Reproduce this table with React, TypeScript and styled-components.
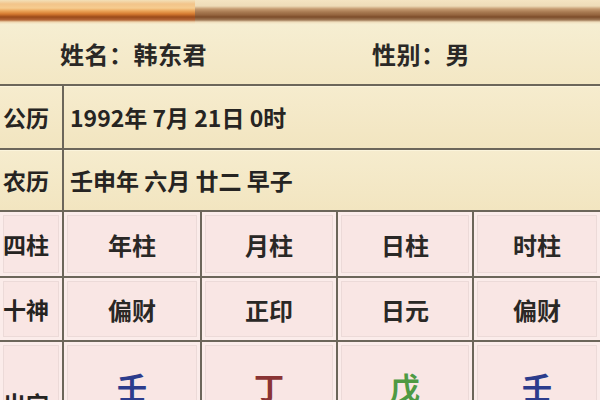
import React from "react";
import styled, { createGlobalStyle } from "styled-components";

const Global = createGlobalStyle`
  html, body { margin: 0; padding: 0; background: #f4e9c8; overflow: hidden; }
  body { font-family: "Noto Sans CJK SC", "Noto Sans", sans-serif; }
`;

const Page = styled.div`
  width: 600px;
  height: 400px;
  overflow: hidden;
  background: #f4e9c8;
  display: flex;
  flex-direction: column;
`;

const Band = styled.div`
  display: flex;
  height: 24px;
  flex: none;
`;

const BandPart = styled.div<{ $tone: "orange" | "brown"; $w?: number }>`
  ${(p) => (p.$w ? `width: ${p.$w}px; flex: none;` : "flex: 1;")}
  background: ${(p) =>
    p.$tone === "orange"
      ? `linear-gradient(to bottom, #f3e0b8 0px, #f2c48a 4px, #f6cc90 8px, #eaa458 11px, #d57a30 14px, #9a4a1a 17px, #b4683a 20px, #efd6b0 22px, #f6edd0 24px)`
      : `linear-gradient(to bottom, #f4e4c2 0px, #eedcb8 6px, #c49a70 9px, #a87a52 12px, #94643e 15px, #7c4c2a 17px, #a07a58 20px, #eedcbc 22px, #f6edd0 24px)`};
`;

const NameRow = styled.div`
  height: 60px;
  flex: none;
  display: flex;
  align-items: center;
  padding-left: 60px;
  padding-bottom: 2px;
  box-sizing: border-box;
  background: linear-gradient(to bottom, #f6eed2, #f3e7c4);
`;

const NameItem = styled.span<{ $w?: number }>`
  ${(p) => (p.$w ? `width: ${p.$w}px;` : "")}
  font-size: 24px;
  font-weight: 700;
  color: #2a2826;
  letter-spacing: 0.5px;
  white-space: nowrap;
`;

const Table = styled.div`
  flex: none;
  display: grid;
  grid-template-columns: 62px 136px 134px 134px 1fr;
  grid-template-rows: 62px 60px 64px 62px 90px;
  gap: 2px;
  background: #6c665a;
  border-top: 2px solid #6c665a;
`;

const Cell = styled.div<{ $tone: "beige" | "pink"; $span?: number; $align?: "left" | "center" }>`
  ${(p) => (p.$span ? `grid-column: span ${p.$span};` : "")}
  display: flex;
  align-items: center;
  justify-content: ${(p) => (p.$align === "left" ? "flex-start" : "center")};
  padding-left: ${(p) => (p.$align === "left" ? "6px" : "0")};
  background: ${(p) =>
    p.$tone === "beige"
      ? "linear-gradient(to bottom, #f6ecce, #f2e5c0)"
      : "#f9e6e4"};
  box-shadow: ${(p) =>
    p.$tone === "pink"
      ? "inset 0 0 0 3px #fbecea, inset 0 0 0 4px #ecdad8"
      : "inset 0 1px 0 #fbf4dc"};
  overflow: hidden;
  white-space: nowrap;
`;

const Label = styled.span`
  font-size: 23px;
  font-weight: 600;
  color: #262422;
  margin-right: 10px;
`;

const LowLabel = styled(Label)`
  align-self: flex-end;
  margin-bottom: 12px;
`;

const Text = styled.span`
  font-size: 23px;
  color: #262422;
  font-weight: 600;
`;

const Head = styled.span`
  font-size: 24px;
  color: #2a2826;
  font-weight: 600;
`;

const Stem = styled.span<{ $color: string }>`
  font-size: 30px;
  font-weight: 600;
  color: ${(p) => p.$color};
  align-self: flex-start;
  margin-top: 22px;
`;

const pillars = ["年柱", "月柱", "日柱", "时柱"];
const gods = ["偏财", "正印", "日元", "偏财"];
const stems: [string, string][] = [
  ["壬", "#2c3c8c"],
  ["丁", "#8a3434"],
  ["戊", "#4e9a44"],
  ["壬", "#2c3c8c"],
];

export default function App() {
  return (
    <Page>
      <Global />
      <Band>
        <BandPart $tone="orange" $w={195} />
        <BandPart $tone="brown" />
      </Band>
      <NameRow>
        <NameItem $w={312}>姓名：韩东君</NameItem>
        <NameItem>性别：男</NameItem>
      </NameRow>
      <Table>
        <Cell $tone="beige"><Label>公历</Label></Cell>
        <Cell $tone="beige" $span={4} $align="left"><Text>1992年 7月 21日 0时</Text></Cell>
        <Cell $tone="beige"><Label>农历</Label></Cell>
        <Cell $tone="beige" $span={4} $align="left"><Text>壬申年 六月 廿二 早子</Text></Cell>
        <Cell $tone="pink"><Label>四柱</Label></Cell>
        {pillars.map((p, i) => (
          <Cell key={"p" + i} $tone="pink"><Head>{p}</Head></Cell>
        ))}
        <Cell $tone="pink"><Label>十神</Label></Cell>
        {gods.map((g, i) => (
          <Cell key={"g" + i} $tone="pink"><Head>{g}</Head></Cell>
        ))}
        <Cell $tone="pink"><LowLabel>出宫</LowLabel></Cell>
        {stems.map(([s, c], i) => (
          <Cell key={"s" + i} $tone="pink"><Stem $color={c}>{s}</Stem></Cell>
        ))}
      </Table>
    </Page>
  );
}
